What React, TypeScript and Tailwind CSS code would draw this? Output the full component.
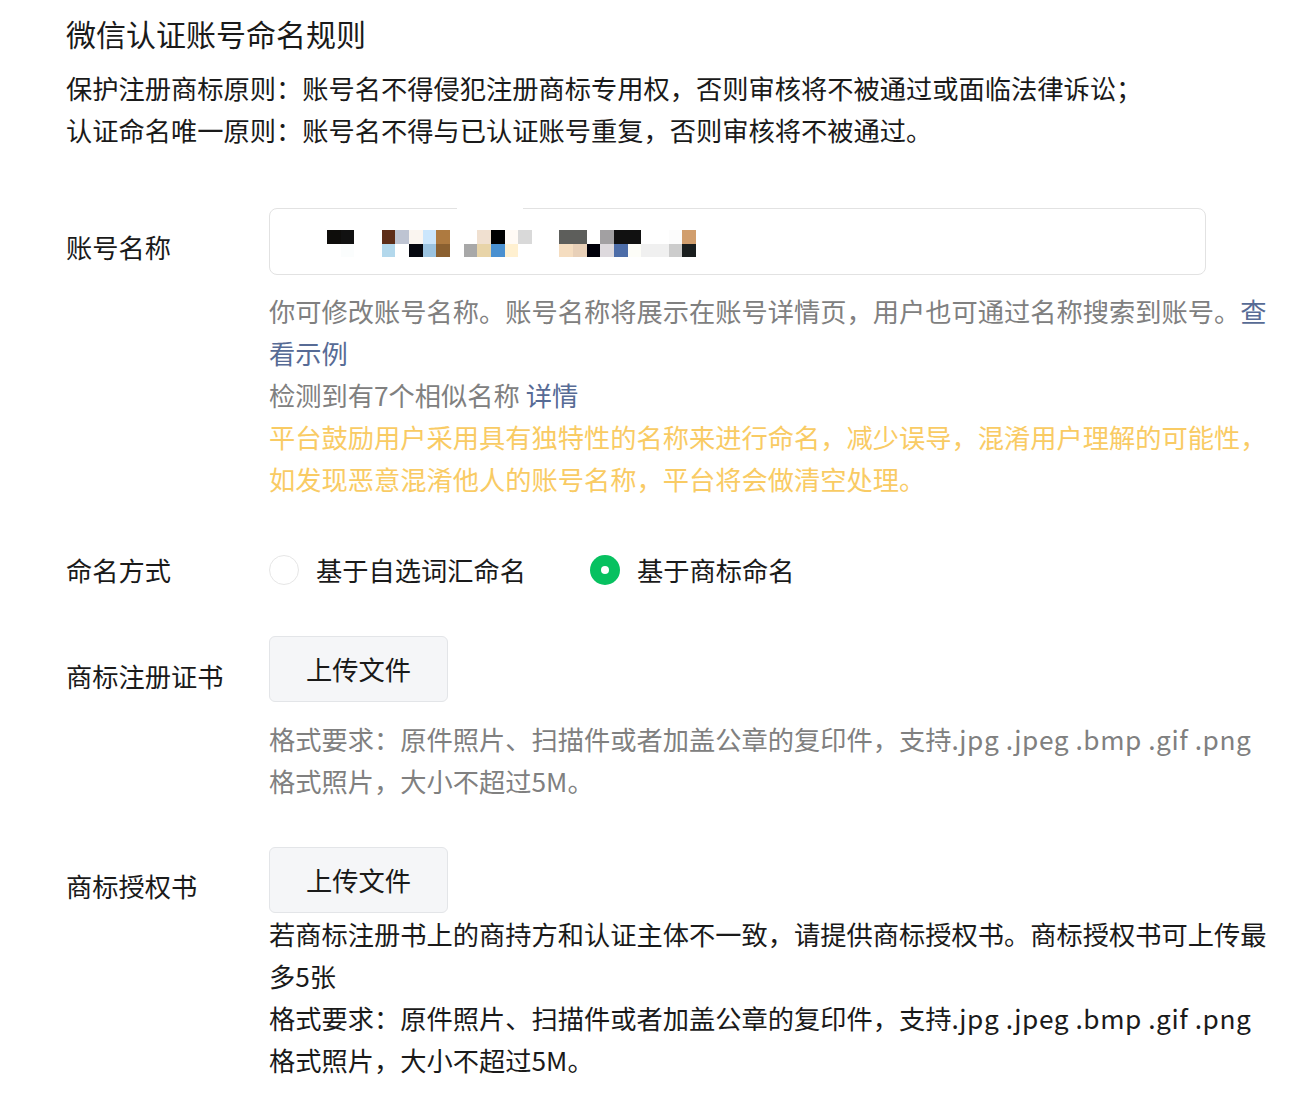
import React from 'react';

const mosaic: (string | null)[][] = [
  ['#0e0d0b', '#111111', null, null, '#5e2e18', '#bec4d2', '#faf5f0', '#cbe6fc', '#ae7a40', null, null, '#f0e0d0', '#000000', '#fffaf5', '#d9d9d9', null, null, '#5d5e5b', '#5d5e5b', null, '#a2a0a2', '#111111', '#111111', null, null, '#fcfcfc', '#d19e6d'],
  [null, '#fbfdfd', null, null, '#b3d8ec', null, '#060810', '#9bc3e0', '#8b6030', null, '#a8a8a8', '#e8d4a8', '#4a90d0', '#fff0d0', null, null, null, '#f5ddc0', '#e8d0b8', '#00000a', '#ddd9dd', '#4d6da8', '#fdfdf8', '#f0f0f0', '#f0f0f0', '#cccccc', '#1a1e1e'],
];

function Row({ label, labelPad, children, className }: { label: string; labelPad: string; children: React.ReactNode; className?: string }) {
  return (
    <div className={`flex ${className ?? ''}`}>
      <div className={`w-[203px] shrink-0 ${labelPad}`}>{label}</div>
      <div className="w-[1000px]">{children}</div>
    </div>
  );
}

function Radio({ checked, label }: { checked?: boolean; label: string }) {
  return (
    <label className="flex items-center gap-[17px]">
      {checked ? (
        <span className="w-[30px] h-[30px] rounded-full bg-[#07c160] flex items-center justify-center">
          <span className="w-[8px] h-[8px] rounded-full bg-white" />
        </span>
      ) : (
        <span className="w-[30px] h-[30px] rounded-full border-[1.5px] border-[#e6e6e6] bg-white" />
      )}
      <span>{label}</span>
    </label>
  );
}

function UploadButton() {
  return (
    <button className="w-[179px] h-[66px] rounded-[6px] bg-[#f5f6f8] border border-[#e3e5e8] text-[26.25px] text-[#1a1a1a]">
      上传文件
    </button>
  );
}

function FormatText({ className }: { className?: string }) {
  return (
    <p className={className}>
      格式要求：原件照片、扫描件或者加盖公章的复印件，支持<span className="tracking-[0.55px]">.jpg .jpeg .bmp .gif .png</span>格式照片，大小不超过5M。
    </p>
  );
}

export default function App() {
  return (
    <div className="min-h-[1095px] bg-white pl-[66px] text-[26.25px] leading-[42px] text-[#1a1a1a] font-['Noto_Sans_CJK_SC',sans-serif]">
      <h1 className="pt-[12px] text-[30px] leading-[42px] font-normal text-[#1a1a1a]">微信认证账号命名规则</h1>
      <div className="mt-[13px]">
        <p>保护注册商标原则：账号名不得侵犯注册商标专用权，否则审核将不被通过或面临法律诉讼；</p>
        <p>认证命名唯一原则：账号名不得与已认证账号重复，否则审核将不被通过。</p>
      </div>

      <Row label="账号名称" labelPad="pt-[18px]" className="mt-[57px]">
        <div className="relative w-[937px] h-[67px] rounded-[8px] border border-[#e2e2e2] pl-[57px] pt-[21px]">
          <div className="absolute left-[187px] top-[-2px] w-[66px] h-[4px] bg-white" />
          <div className="grid w-[369px] h-[27px] grid-cols-[repeat(27,minmax(0,1fr))] grid-rows-2">
            {mosaic.flatMap((row, r) =>
              row.map((c, i) => <span key={`${r}-${i}`} style={{ backgroundColor: c ?? 'transparent' }} />)
            )}
          </div>
        </div>
        <div className="mt-[15px] text-[#808080]">
          <p>
            你可修改账号名称。账号名称将展示在账号详情页，用户也可通过名称搜索到账号。<a className="text-[#576b95]">查看示例</a>
          </p>
          <p>
            检测到有7个相似名称 <a className="text-[#576b95]">详情</a>
          </p>
          <p className="text-[#f9cb64]">平台鼓励用户采用具有独特性的名称来进行命名，减少误导，混淆用户理解的可能性，如发现恶意混淆他人的账号名称，平台将会做清空处理。</p>
        </div>
      </Row>

      <Row label="命名方式" labelPad="" className="mt-[49px]">
        <div className="flex items-center gap-[64px]">
          <Radio label="基于自选词汇命名" />
          <Radio checked label="基于商标命名" />
        </div>
      </Row>

      <Row label="商标注册证书" labelPad="pt-[19px]" className="mt-[45px]">
        <UploadButton />
        <FormatText className="mt-[16px] text-[#808080]" />
      </Row>

      <Row label="商标授权书" labelPad="pt-[18px]" className="mt-[45px]">
        <UploadButton />
        <div>
          <p>若商标注册书上的商持方和认证主体不一致，请提供商标授权书。商标授权书可上传最多5张</p>
          <FormatText />
        </div>
      </Row>
    </div>
  );
}
